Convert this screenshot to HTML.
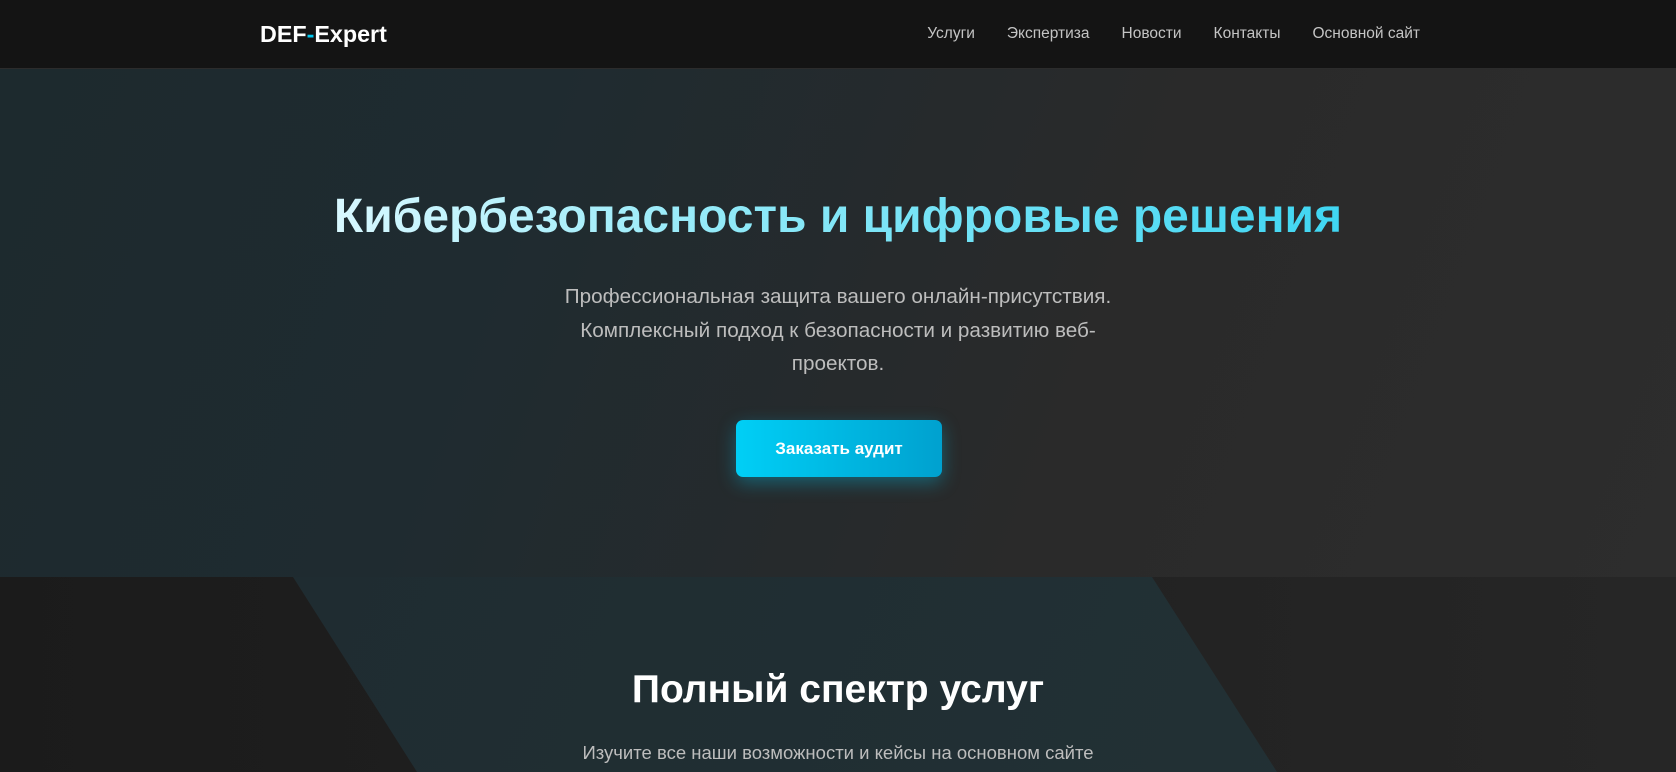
<!DOCTYPE html>
<html><head><meta charset="utf-8">
<style>
*{margin:0;padding:0;box-sizing:border-box}
html,body{width:1676px;height:772px;overflow:hidden;background:#1c1c1c;font-family:"Liberation Sans",Arial,sans-serif}
nav{position:absolute;left:0;top:0;width:1676px;height:69px;background:#141414;border-bottom:1px solid #2c2c2c}
.logo{position:absolute;left:260px;top:21px;font-size:23.3px;font-weight:bold;color:#fff}
.logo span{color:#00c8f0}
.links{position:absolute;right:256px;top:25px;display:flex;gap:32px;font-size:15.5px;color:#c4c4c4}
.hero{position:absolute;left:0;top:69px;width:1676px;height:508px;background:linear-gradient(110deg,#1d2a2e 0%,#1f2b30 30%,#2a2a2a 65%,#2d2d2d 100%)}
h1{position:absolute;left:0;width:1676px;top:118px;text-align:center;font-size:48px;font-weight:bold;line-height:60px}
h1 span{background:linear-gradient(90deg,#d8f8ff 0%,#8fe9f8 40%,#3fd6f2 100%);-webkit-background-clip:text;background-clip:text;color:transparent}
.p{position:absolute;left:553px;width:570px;top:211px;text-align:center;color:#bdbdbd;font-size:20.7px;line-height:33.5px}
.btn{position:absolute;left:736px;top:351px;width:206px;height:57px;border-radius:7px;background:linear-gradient(90deg,#00cff6,#00a1cf);color:#fff;font-weight:bold;font-size:17px;text-align:center;line-height:57px;box-shadow:0 6px 18px rgba(0,200,240,.35)}
.sec{position:absolute;left:0;top:577px;width:1676px;height:195px;background:linear-gradient(90deg,#1b1b1b,#262626)}
.para{position:absolute;left:0;top:0;width:1676px;height:195px;background:linear-gradient(110deg,#1e2b30,#233236);clip-path:polygon(293px 0,1152px 0,1277px 195px,417px 195px)}
h2{position:absolute;left:0;width:1676px;top:91px;text-align:center;color:#fff;font-size:39px;font-weight:bold}
.s{position:absolute;left:0;width:1676px;top:165px;text-align:center;color:#bdbdbd;font-size:18.5px}
</style></head><body>
<nav><div class="logo">DEF<span>-</span>Expert</div>
<div class="links"><span>Услуги</span><span>Экспертиза</span><span>Новости</span><span>Контакты</span><span>Основной сайт</span></div></nav>
<div class="hero">
<h1><span>Кибербезопасность и цифровые решения</span></h1>
<div class="p">Профессиональная защита вашего онлайн-присутствия. Комплексный подход к безопасности и развитию веб-проектов.</div>
<div class="btn">Заказать аудит</div>
</div>
<div class="sec"><div class="para"></div>
<h2>Полный спектр услуг</h2>
<div class="s">Изучите все наши возможности и кейсы на основном сайте</div>
</div>
</body></html>
